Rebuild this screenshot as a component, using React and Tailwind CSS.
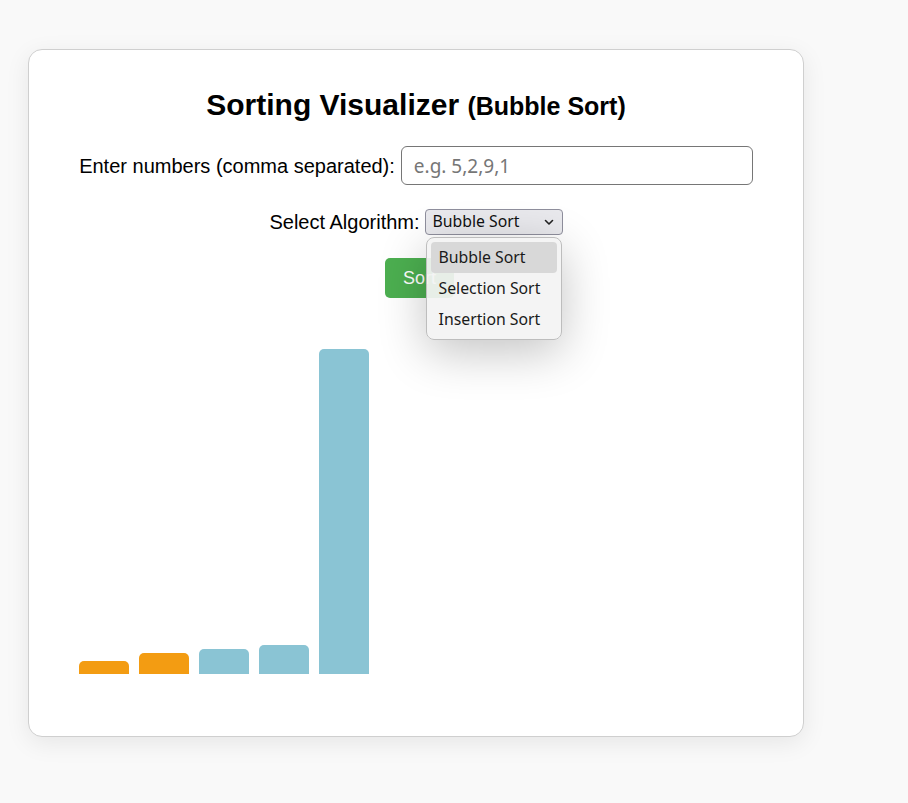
import { useState } from "react";

// Sorting visualizer card with the algorithm dropdown shown open.
const bars = [
  { h: 13, c: "bg-[#f39c12]" },
  { h: 21, c: "bg-[#f39c12]" },
  { h: 25, c: "bg-[#8ac4d4]" },
  { h: 29, c: "bg-[#8ac4d4]" },
  { h: 325, c: "bg-[#8ac4d4]" },
];

const algos = ["Bubble Sort", "Selection Sort", "Insertion Sort"];

function Chevron() {
  return (
    <svg width="10" height="7" viewBox="0 0 10 7" className="text-[#222]">
      <path d="M1.5 1.5 L5 5 L8.5 1.5" fill="none" stroke="currentColor" strokeWidth="1.6" strokeLinecap="round" strokeLinejoin="round" />
    </svg>
  );
}

export default function App() {
  const [algo] = useState("Bubble Sort");

  return (
    <div className="min-h-screen bg-[#f9f9f9] pt-[49px] pl-[28px] font-['Liberation_Sans',Arial,sans-serif] text-black">
      <div className="w-[776px] h-[688px] bg-white border border-[#cfcfcf] rounded-[14px] shadow-[0_6px_24px_rgba(0,0,0,0.08)] pt-[38px]">
        <h1 className="text-center text-[30px] leading-[34px] font-bold">
          Sorting Visualizer <span className="text-[25px]">(Bubble Sort)</span>
        </h1>

        <div className="mt-[23px] flex items-center justify-center gap-[6px]">
          <label className="text-[20px] leading-[24px]">Enter numbers (comma separated):</label>
          <input
            placeholder="e.g. 5,2,9,1"
            className="w-[352px] h-[39px] border border-[#767676] rounded-[6px] px-[12px] text-[19px] font-['Noto_Sans',sans-serif] placeholder:text-[#767676] outline-none"
          />
        </div>

        <div className="mt-[24px] flex items-center justify-center gap-[5px]">
          <span className="text-[20px] leading-[24px]">Select Algorithm:</span>
          <div className="relative">
            <div className="w-[138px] h-[26px] bg-[#e9e9ed] border border-[#8f8f9d] rounded-[4px] flex items-center justify-between pl-[7px] pr-[8px] font-['Noto_Sans',sans-serif] text-[15.8px] text-[#111]">
              <span>{algo}</span>
              <Chevron />
            </div>
            <div className="absolute left-[1px] top-[28px] z-10 w-[136px] h-[103px] rounded-[8px] border border-[#bdbdbd] bg-[rgba(243,243,243,0.93)] shadow-[0_12px_48px_rgba(0,0,0,0.24)] p-[4px] font-['Noto_Sans',sans-serif] text-[15.8px] text-[#1a1a1a]">
              {algos.map((a) => (
                <div
                  key={a}
                  className={`h-[31px] flex items-center pl-[8px] rounded-[4px] ${a === algo ? "bg-[#d8d8d8]" : ""}`}
                >
                  {a}
                </div>
              ))}
            </div>
          </div>
        </div>

        <div className="mt-[23px] flex justify-center">
          <button className="ml-[7px] h-[40px] px-[18px] bg-[#4caf50] text-white text-[18px] rounded-[5px]">Sort</button>
        </div>

        <div className="mt-[51px] h-[325px] pl-[50px] flex items-end gap-[10px]">
          {bars.map((b, i) => (
            <div key={i} className={`w-[50px] rounded-t-[5px] ${b.c}`} style={{ height: b.h }} />
          ))}
        </div>
      </div>
    </div>
  );
}
